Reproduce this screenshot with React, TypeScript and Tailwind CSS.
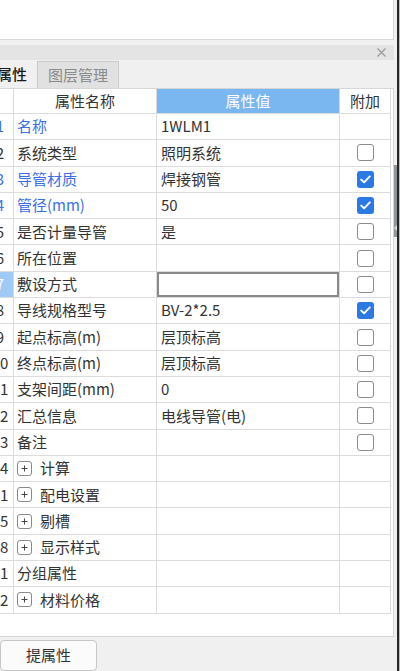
import React from "react";

type Row = {
  n: string;
  name: string;
  blue?: boolean;
  val?: string;
  cb?: boolean | null;
  plus?: boolean;
  selected?: boolean;
};

const rows: Row[] = [
  { n: "1", name: "名称", blue: true, val: "1WLM1", cb: null },
  { n: "2", name: "系统类型", val: "照明系统", cb: false },
  { n: "3", name: "导管材质", blue: true, val: "焊接钢管", cb: true },
  { n: "4", name: "管径(mm)", blue: true, val: "50", cb: true },
  { n: "5", name: "是否计量导管", val: "是", cb: false },
  { n: "6", name: "所在位置", val: "", cb: false },
  { n: "7", name: "敷设方式", val: "", cb: false, selected: true },
  { n: "8", name: "导线规格型号", val: "BV-2*2.5", cb: true },
  { n: "9", name: "起点标高(m)", val: "层顶标高", cb: false },
  { n: "10", name: "终点标高(m)", val: "层顶标高", cb: false },
  { n: "11", name: "支架间距(mm)", val: "0", cb: false },
  { n: "12", name: "汇总信息", val: "电线导管(电)", cb: false },
  { n: "13", name: "备注", val: "", cb: false },
  { n: "14", name: "计算", plus: true, cb: null },
  { n: "21", name: "配电设置", plus: true, cb: null },
  { n: "25", name: "剔槽", plus: true, cb: null },
  { n: "28", name: "显示样式", plus: true, cb: null },
  { n: "31", name: "分组属性", cb: null },
  { n: "32", name: "材料价格", plus: true, cb: null },
];

function Checkbox({ checked }: { checked: boolean }) {
  if (checked) {
    return (
      <div className="w-[17px] h-[17px] rounded-[3px] bg-[#2b7ae3] flex items-center justify-center">
        <svg width="11" height="9" viewBox="0 0 11 9">
          <path d="M1.2 4.6 L4.1 7.3 L9.8 1.4" fill="none" stroke="white" strokeWidth="1.9" strokeLinecap="round" strokeLinejoin="round" />
        </svg>
      </div>
    );
  }
  return <div className="w-[17px] h-[17px] rounded-[3px] border border-[#8c8c8c] bg-white" />;
}

function PlusBox() {
  return (
    <div className="w-[15px] h-[15px] rounded-[3px] border border-[#8a8a8a] flex items-center justify-center mr-[8px] shrink-0">
      <svg width="7" height="7" viewBox="0 0 7 7">
        <path d="M3.5 0.5 V6.5 M0.5 3.5 H6.5" stroke="#444" strokeWidth="1" />
      </svg>
    </div>
  );
}

export default function App() {
  const font = { fontFamily: '"Noto Sans CJK SC", "Noto Sans", sans-serif' };
  return (
    <div className="w-[400px] h-[671px] bg-[#f0f0f0] flex overflow-hidden text-[15px] text-[#333]" style={font}>
      <div className="w-[394px] flex flex-col shrink-0">
        <div className="h-[40px] bg-white border-r border-b border-[#d6d6d6]" />
        <div className="h-[5px]" />
        <div className="h-[15px] bg-[#e4e4e4] flex items-center justify-end pr-[8px]">
          <svg width="9" height="9" viewBox="0 0 9 9">
            <path d="M0.5 0.5 L8.5 8.5 M8.5 0.5 L0.5 8.5" stroke="#9a9a9a" strokeWidth="1.2" />
          </svg>
        </div>
        <div className="h-[28px] flex items-stretch">
          <div className="w-[37px] flex items-center justify-end pr-[10px] overflow-hidden text-[#1a1a1a] font-medium whitespace-nowrap">
            属性
          </div>
          <div className="w-[82px] mt-[1px] bg-[#e1e1e1] border border-b-0 border-[#cacaca] flex items-center justify-center text-[#8a8a8a]">
            图层管理
          </div>
        </div>
        <div className="h-[549px] bg-white border border-l-0 border-[#d6d6d6]">
          <div className="w-[391px] flex flex-col">
            <div className="h-[25px] flex border-b border-[#dcdcdc]">
              <div className="w-[14px] border-r border-[#dcdcdc]" />
              <div className="w-[143px] border-r border-[#dcdcdc] flex items-center justify-center">属性名称</div>
              <div className="w-[183px] border-r border-[#dcdcdc] bg-[#7ab6f0] text-white flex items-center justify-center">属性值</div>
              <div className="w-[51px] border-r border-[#dcdcdc] flex items-center justify-center">附加</div>
            </div>
            {rows.map((r) => (
              <div key={r.n} className="h-[26.3px] flex border-b border-[#dcdcdc]">
                <div
                  className={
                    "w-[14px] border-r border-[#dcdcdc] flex items-center overflow-hidden whitespace-nowrap " +
                    (r.selected ? "bg-[#9fcaf4] text-white" : r.blue ? "text-[#3a6fe3]" : "text-[#333]")
                  }
                >
                  <span className="ml-[-14px] w-[28px] shrink-0 text-center">{r.n}</span>
                </div>
                <div
                  className={
                    "w-[143px] border-r border-[#dcdcdc] flex items-center pl-[3px] whitespace-nowrap " +
                    (r.blue ? "text-[#3a6fe3]" : "text-[#333]")
                  }
                >
                  {r.plus && <PlusBox />}
                  {r.name}
                </div>
                {r.selected ? (
                  <div className="w-[183px] border-r border-[#dcdcdc] flex items-stretch">
                    <div className="flex-1 border-2 border-[#8a8a8a]" />
                  </div>
                ) : (
                  <div className="w-[183px] border-r border-[#dcdcdc] flex items-center pl-[4px] whitespace-nowrap">
                    {r.val}
                  </div>
                )}
                <div className="w-[51px] border-r border-[#dcdcdc] flex items-center justify-center">
                  {r.cb !== null && r.cb !== undefined && <Checkbox checked={r.cb} />}
                </div>
              </div>
            ))}
          </div>
        </div>
        <div className="pt-[3px]">
          <div className="w-[97px] h-[31px] rounded-[4px] border border-[#c6c6c6] bg-[#fbfbfb] flex items-center justify-center text-[#333]">
            提属性
          </div>
        </div>
      </div>
      <div className="flex shrink-0">
        <div className="w-[3px] flex flex-col">
          <div className="h-[165px]" />
          <div className="h-[72px] bg-[#8e959b] flex items-end justify-center pb-[6px]">
            <svg width="3" height="6" viewBox="0 0 3 6">
              <path d="M3 0 L0 3 L3 6 Z" fill="#d8d8d8" />
            </svg>
          </div>
        </div>
        <div className="w-[2px] bg-[#262626]" />
        <div className="w-[1px] bg-[#bdbdbd]" />
      </div>
    </div>
  );
}
